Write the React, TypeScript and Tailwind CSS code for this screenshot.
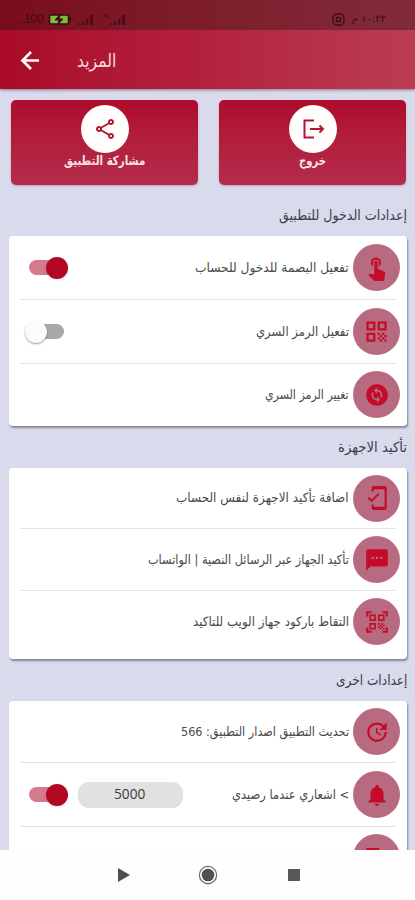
import { useLayoutEffect, useRef, useState } from "react";
import type { ReactNode } from "react";
import {
  MdTouchApp, MdQrCode, MdChangeCircle, MdMobileFriendly, MdSms,
  MdQrCodeScanner, MdUpdate, MdNotifications, MdOutlineShare,
} from "react-icons/md";

const arabic = "font-['DejaVu_Sans','Noto_Sans',sans-serif]";

/* One line of text condensed horizontally to the given width. */
function Label({ width, className = "", children }: { width: number; className?: string; children: ReactNode }) {
  const ref = useRef<HTMLSpanElement>(null);
  const [scale, setScale] = useState(1);
  useLayoutEffect(() => {
    if (ref.current) setScale(width / ref.current.offsetWidth);
  }, [width]);
  return (
    <span dir="rtl" className={`flex shrink-0 justify-start whitespace-nowrap ${className}`} style={{ width }}>
      <span ref={ref} className="block shrink-0 origin-right" style={{ transform: `scaleX(${scale})` }}>{children}</span>
    </span>
  );
}

function Toggle({ on }: { on: boolean }) {
  return on ? (
    <div className="ml-5 flex h-[22px] w-[39px] items-center">
      <div className="flex h-[15px] w-[36px] items-center justify-end rounded-full bg-[#d5798c]">
        <div className="-mr-[3px] size-[22px] shrink-0 rounded-full bg-[#b30622] shadow-sm" />
      </div>
    </div>
  ) : (
    <div className="ml-[17px] flex h-[22px] w-[38px] items-center">
      <div className="ml-[3px] flex h-[15px] w-[35px] items-center rounded-full bg-[#a9a9a9]">
        <div className="-ml-[4px] size-[22px] shrink-0 rounded-full bg-[#fbfbfb] shadow-[0_1px_2px_rgba(0,0,0,0.4)]" />
      </div>
    </div>
  );
}

function Row({ icon, text, width, h, children }: { icon: ReactNode; text?: string; width?: number; h: string; children?: ReactNode }) {
  return (
    <div className={`flex shrink-0 items-center ${h}`}>
      {children}
      <div className="ml-auto flex items-center">
        {text && width && <Label width={width} className="mr-[4px] text-[13px] leading-5 text-[#4a4a4c]">{text}</Label>}
        <div className="mr-[7px] flex size-[47px] items-center justify-center rounded-full bg-[#b86b80] text-[#c30c28]">{icon}</div>
      </div>
    </div>
  );
}

const Divider = () => <div className="mx-[11px] h-px shrink-0 bg-[#dfe3e5]" />;

const card = "ml-[9px] flex w-[398px] flex-col rounded-[4px] bg-white";
const cardShadow = "shadow-[1px_2px_2px_rgba(80,80,95,0.6)]";

function Heading({ width, h, children }: { width: number; h: string; children: ReactNode }) {
  return (
    <div className={`flex shrink-0 items-center justify-end pr-2 ${h}`}>
      <Label width={width} className="text-[14px] leading-5 text-[#3c3d4c]">{children}</Label>
    </div>
  );
}

function ActionCard({ icon, text, width }: { icon: ReactNode; text: string; width: number }) {
  return (
    <div className="flex h-[85px] w-[187px] flex-col items-center rounded-[5px] bg-linear-to-b from-[#ae0a2b] to-[#b52c4c] pt-[5px] shadow-[0_1px_2px_rgba(80,50,80,0.3)]">
      <div className="flex size-[48px] items-center justify-center rounded-full bg-[#fffefc] text-[#b31432]">{icon}</div>
      <Label width={width} className="-mt-[2px] text-[13px] font-bold leading-5 text-[#f8e4e6]">{text}</Label>
    </div>
  );
}

function Signal() {
  return (
    <svg width="17" height="11" viewBox="0 0 17 11" fill="#4a0d19">
      <rect x="0" y="9" width="2" height="2" /><rect x="4" y="7" width="2" height="4" />
      <rect x="8" y="5" width="2.4" height="6" /><rect x="12" y="1" width="3" height="10" />
    </svg>
  );
}

export default function App() {
  return (
    <div className={`flex h-[900px] w-[415px] flex-col overflow-hidden bg-[#d9daeb] ${arabic}`}>
      <div className="flex h-[30px] shrink-0 items-center bg-linear-to-r from-[#790b1d] to-[#812b3a] pl-[17px] pr-[29px] pt-[8px] text-[#3d0b15]">
        <span className="w-[31px] font-['Liberation_Sans',sans-serif] text-[12px] leading-4">..100</span>
        <svg width="23" height="11" viewBox="0 0 23 11">
          <rect x="1.5" y="1" width="19" height="9" rx="1.5" fill="#7fbd32" stroke="#35101a" strokeWidth="1.6" />
          <rect x="21" y="3.5" width="2" height="4" fill="#35101a" />
          <path d="M12.5 0 7 6h4L9.5 11 15 5h-4z" fill="#35101a" stroke="#35101a" />
        </svg>
        <div className="ml-[7px]"><Signal /></div>
        <div className="ml-[7px] flex items-center">
          <span className="-mt-[7px] font-['Liberation_Sans',sans-serif] text-[6px] leading-3">4G</span>
          <Signal />
        </div>
        <svg className="ml-auto" width="13" height="13" viewBox="0 0 13 13" fill="none" stroke="#3d0b15">
          <rect x="1" y="1" width="11" height="11" rx="4" strokeWidth="1.3" /><rect x="4.5" y="4.5" width="4" height="4" strokeWidth="1.3" />
        </svg>
        <Label width={34} className="ml-[7px] text-[10px] leading-4">١٠:٢٢ م</Label>
      </div>
      <div className="flex h-[59px] shrink-0 items-center bg-linear-to-r from-[#a90a26] via-[#b4213f] to-[#ba3d51] shadow-[0_1px_3px_rgba(80,50,80,0.6)]">
        <svg className="ml-[18px] mt-[2px]" width="25" height="25" viewBox="0 0 25 25" fill="none" stroke="#ffffff" strokeWidth="2.7">
          <path d="M21 12.5H5M13 4l-8.5 8.5L13 21" />
        </svg>
        <Label width={39} className="ml-[34px] pt-0.5 text-[18px] leading-6 text-[#f8dfe2]">المزيد</Label>
      </div>
      <div className="mt-[11px] flex shrink-0 justify-between pl-[11px] pr-[9px]">
        <ActionCard text="مشاركة التطبيق" width={81} icon={<MdOutlineShare className="size-6" />} />
        <ActionCard text="خروج" width={27} icon={
          <svg width="24" height="24" viewBox="0 0 24 24" fill="none" stroke="currentColor" strokeWidth="2">
            <path d="M13 3.5H3.5v17H13M9 12h13M18.5 8.5 22 12l-3.5 3.5" />
          </svg>} />
      </div>
      <Heading width={128} h="h-[51px] pt-[9px]">إعدادات الدخول للتطبيق</Heading>
      <div className={`${card} ${cardShadow} h-[190px] shrink-0`}>
        <Row h="h-[63px]" width={154} text="تفعيل البصمة للدخول للحساب" icon={<MdTouchApp className="size-[27px]" />}><Toggle on /></Row>
        <Divider />
        <Row h="h-[63px]" width={93} text="تفعيل الرمز السري" icon={<MdQrCode className="size-[27px]" />}><Toggle on={false} /></Row>
        <Divider />
        <Row h="h-[61px]" width={84} text="تغيير الرمز السري" icon={<MdChangeCircle className="size-[26px]" />} />
      </div>
      <Heading width={69} h="h-[42px]">تأكيد الاجهزة</Heading>
      <div className={`${card} ${cardShadow} h-[191px] shrink-0`}>
        <Row h="h-[60px]" width={173} text="اضافة تأكيد الاجهزة لنفس الحساب" icon={<MdMobileFriendly className="size-[26px]" />} />
        <Divider />
        <Row h="h-[61px]" width={201} text="تأكيد الجهاز عبر الرسائل النصية | الواتساب" icon={<MdSms className="size-[26px]" />} />
        <Divider />
        <Row h="h-[61px]" width={156} text="التقاط باركود جهاز الويب للتاكيد" icon={<MdQrCodeScanner className="size-[26px]" />} />
      </div>
      <Heading width={71} h="h-[42px]">إعدادات اخرى</Heading>
      <div className="flex h-[149px] shrink-0 overflow-hidden">
        <div className={`${card} ${cardShadow} h-[200px]`}>
          <Row h="h-[61px]" width={168} text="تحديث التطبيق اصدار التطبيق: 566" icon={<MdUpdate className="size-[26px]" />} />
          <Divider />
          <Row h="h-[63px]" width={117} text="> اشعاري عندما رصيدي" icon={<MdNotifications className="size-[26px]" />}>
            <Toggle on />
            <div className="ml-[10px] flex h-[26px] w-[105px] items-center justify-center rounded-[11px] bg-[#e1e1e1] font-['Open_Sans',sans-serif] text-[#3c3c3c]">
              <Label width={31} className="-ml-[2px] -mt-[3px] text-[15px] leading-6">5000</Label>
            </div>
          </Row>
          <Divider />
          <Row h="h-[61px]" icon={
            <svg width="22" height="20" viewBox="0 0 22 20" fill="none" stroke="currentColor" strokeWidth="2.4">
              <path d="M12 1.2H1.5V17H20V7H12z" />
            </svg>} />
        </div>
      </div>
      <div className="flex h-[50px] shrink-0 items-center bg-[#fefefe] pl-[117px]">
        <svg width="14" height="14" viewBox="0 0 14 14"><path d="M1 0v14L13 7z" fill="#505050" /></svg>
        <svg className="ml-[67px]" width="20" height="20" viewBox="0 0 20 20"><circle cx="10" cy="10" r="8.6" fill="none" stroke="#666" strokeWidth="1.2" /><circle cx="10" cy="10" r="6.3" fill="#505050" /></svg>
        <div className="ml-[70px] size-[12px] bg-[#585858]" />
      </div>
    </div>
  );
}
